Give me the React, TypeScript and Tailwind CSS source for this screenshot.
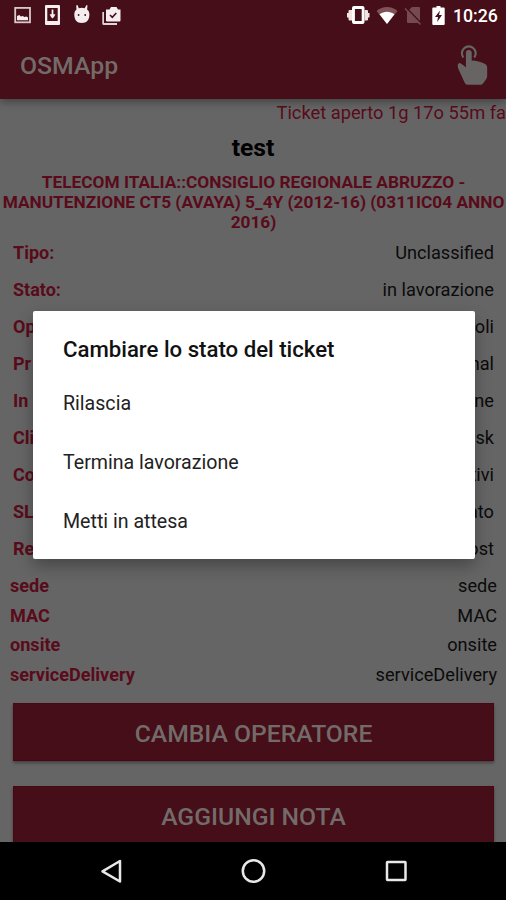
interface Field {
  label: string;
  value: string;
}

const FIELDS: Field[] = [
  { label: 'Tipo:', value: 'Unclassified' },
  { label: 'Stato:', value: 'in lavorazione' },
  { label: 'Op', value: 'oli' },
  { label: 'Pr', value: 'nal' },
  { label: 'In', value: 'ne' },
  { label: 'Cli', value: 'sk' },
  { label: 'Co', value: 'tivi' },
  { label: 'SL', value: 'ato' },
  { label: 'Re', value: 'ost' },
];

const EXTRA_FIELDS: Field[] = [
  { label: 'sede', value: 'sede' },
  { label: 'MAC', value: 'MAC' },
  { label: 'onsite', value: 'onsite' },
  { label: 'serviceDelivery', value: 'serviceDelivery' },
];

const OPTIONS = ['Rilascia', 'Termina lavorazione', 'Metti in attesa'];

function NotificationIcons() {
  return (
    <svg width="124" height="30" viewBox="0 0 124 30" fill="#f6eeee" aria-hidden="true">
      <rect x="15.200" y="7.900" width="14.800" height="14.400" fill="none" stroke="#d9c8ca" strokeWidth="1.800" />
      <path d="M17 20.300v-4.300l2.300-1 1.500 1.500 2-.5 1.500 1 2-.5 1.700 1v2.800z" />
      <path fillRule="evenodd" d="M46 5h13a1 1 0 0 1 1 1v18a1 1 0 0 1-1 1H46a1 1 0 0 1-1-1V6a1 1 0 0 1 1-1zM47.300 8v13h10.400V8z" />
      <path d="M51.600 9.500h1.800v4.800h2L54 17l-1.500 1.500L51 17l-1.400-2.700h2z" />
      <path d="M77.500 5l1.300 3.200a9 9 0 0 1 5.900 0L86.500 5l1 .6-.4 3.900c1.600 1 2.300 2.700 2.300 5 0 5-2.500 8.500-7.600 8.500s-7.500-3.500-7.500-8.500c0-2.300.700-4 2.200-5l-.3-3.900z" />
      <circle cx="78.600" cy="15" r="0.900" fill="#450e18" />
      <circle cx="85.200" cy="15" r="0.900" fill="#450e18" />
      <path d="M102.300 12h1.700v11H117v2h-13.200a1.500 1.500 0 0 1-1.500-1.500z" fill="#e3d5d7" />
      <path d="M106 9.500h3.500l1.500-2.500h5.500l1.500 2.500h2.500v11a1 1 0 0 1-1 1h-12.500a1 1 0 0 1-1-1z" />
      <path d="M110 15l2.300 2.300 4-4.300" fill="none" stroke="#450e18" strokeWidth="1.600" />
    </svg>
  );
}

function SystemIcons() {
  return (
    <svg width="106" height="30" viewBox="0 0 106 30" fill="#ffffff" aria-hidden="true">
      <path fillRule="evenodd" d="M14 6h8.500a2 2 0 0 1 2 2v14a2 2 0 0 1-2 2H14a2 2 0 0 1-2-2V8a2 2 0 0 1 2-2zM14.900 9v12h6.800V9z" />
      <path d="M9.500 10H12v10.500H9.500a1 1 0 0 1-1-1V11a1 1 0 0 1 1-1zM7 13h1.500v4.500H7zM24.500 10H27a1 1 0 0 1 1 1v8.500a1 1 0 0 1-1 1h-2.500zM28 13h1.500v4.500H28z" fill="#f0e4e5" />
      <path d="M36.500 11C42.500 5.500 51.500 5.500 57.500 11L47 24z" fill="#805159" />
      <path d="M39.500 14.300c4.500-3.500 10.500-3.500 15 0L47 24z" />
      <path d="M72 7h7a1 1 0 0 1 1 1v14a1 1 0 0 1-1 1H68a1 1 0 0 1-1-1V12z" fill="#754a52" />
      <path d="M66 7.500L81 23" stroke="#450e18" strokeWidth="1.500" />
      <path d="M65 8.500L80.500 24.500" stroke="#754a52" strokeWidth="1.500" />
      <path
        fillRule="evenodd"
        d="M96.500 6v1.500h-3.200a1 1 0 0 0-1 1V24a1 1 0 0 0 1 1h10.400a1 1 0 0 0 1-1V8.500a1 1 0 0 0-1-1h-3.200V6zM100 10.500L95 17h3l-.8 5 4.800-7h-3z"
      />
    </svg>
  );
}

function TapIcon() {
  return (
    <svg width="32" height="42" viewBox="0 0 32 42" aria-hidden="true">
      <path d="M6.300 13.500a6.900 6.900 0 1 1 11 0" fill="none" stroke="#686463" strokeWidth="2.200" />
      <path
        d="M8.900 9a2.900 2.900 0 0 1 5.800 0v7.500c4.500.2 9.500 1.300 13 3.200 1.800 1 2.500 2 2.500 4v8c0 2-.8 3.200-2 4.800l-2 2.800c-.9 1.100-1.700 1.500-3.200 1.500H11c-1.500 0-2.500-.5-3.300-2L1.200 24.500c-.8-3-.6-5 1.100-5.500 1.300-.3 4 2 6.600 4.500z"
        fill="#686463"
      />
    </svg>
  );
}

function StatusBar() {
  return (
    <div className="flex h-[30px] items-center justify-between">
      <NotificationIcons />
      <div className="flex items-center">
        <SystemIcons />
        <span className="w-[60px] pl-[7px] pt-[2px] text-[17.700px] font-medium leading-[30px] text-white">
          10:26
        </span>
      </div>
    </div>
  );
}

function FieldRow({ label, value }: Field) {
  return (
    <div className="flex h-[37px] items-center justify-between">
      <span className="text-[18px] font-bold text-[#590b1b]">{label}</span>
      <span>{value}</span>
    </div>
  );
}

function ActionButton({ children }: { children: string }) {
  return (
    <button className="block h-[58px] w-full shrink-0 border border-[#4a0614] bg-[#450e18] pt-px text-[24.700px] font-medium leading-[57px] text-[#736b69] shadow-[0_2px_3px_rgba(0,0,0,0.35)]">
      {children}
    </button>
  );
}

function StateDialog() {
  return (
    <div className="absolute left-[33px] top-[311px] h-[248px] w-[442px] rounded-[2px] bg-white px-[30px] pt-[20px] text-[#222] shadow-[0_7px_16px_rgba(0,0,0,0.3)]">
      <h2 className="text-[22.200px] font-medium leading-[36px] text-[#111]">Cambiare lo stato del ticket</h2>
      <ul className="pt-[7px] text-[19.600px]">
        {OPTIONS.map((option) => (
          <li key={option} className="h-[59px] leading-[59px]">
            {option}
          </li>
        ))}
      </ul>
    </div>
  );
}

function NavBar() {
  return (
    <nav className="h-[58px] w-full bg-black">
      <svg width="506" height="58" viewBox="0 0 506 58" fill="none" stroke="#e8e8e8" strokeWidth="2.500" aria-hidden="true">
        <path d="M120 19v20.500L102.500 29.300z" strokeLinejoin="round" />
        <circle cx="253.500" cy="29" r="10.700" />
        <rect x="387" y="20" width="18.500" height="18" rx="0.500" />
      </svg>
    </nav>
  );
}

export default function App() {
  return (
    <div className="relative flex h-[900px] w-[506px] flex-col overflow-hidden bg-[#656565] font-[Roboto,sans-serif] text-[18.200px] text-[#0b0b0b]">
      <header className="relative h-[99px] shrink-0 bg-[#450e18] shadow-[0_3px_8px_rgba(0,0,0,0.35)]">
        <StatusBar />
        <div className="flex h-[69px] items-center justify-between pl-5 pr-[17px]">
          <h1 className="pt-[3px] text-[24.800px] font-medium text-[#736b69]">OSMApp</h1>
          <TapIcon />
        </div>
      </header>

      <main className="h-[743px] shrink-0 overflow-hidden">
        <p className="h-[28px] text-right text-[18.300px] leading-[28px] text-[#590b1b]">
          Ticket aperto 1g 17o 55m fa
        </p>
        <h2 className="h-[45px] text-center text-[24.700px] font-bold leading-[41px] text-black">test</h2>
        <p className="h-[62px] whitespace-nowrap pl-px text-center text-[17.300px] font-bold leading-[20px] text-[#590b1b]">
          TELECOM ITALIA::CONSIGLIO REGIONALE ABRUZZO -<br />
          MANUTENZIONE CT5 (AVAYA) 5_4Y (2012-16) (0311IC04 ANNO
          <br />
          2016)
        </p>
        <div className="pl-[13px] pr-3">
          {FIELDS.map((field) => (
            <FieldRow key={field.label} {...field} />
          ))}
        </div>
        <div className="pl-[10px] pr-[9px] pt-[4px]">
          {EXTRA_FIELDS.map(({ label, value }) => (
            <div key={label} className="flex h-[29.500px] items-center justify-between">
              <span className="text-[18.100px] font-bold text-[#590b1b]">{label}</span>
              <span>{value}</span>
            </div>
          ))}
        </div>
        <div className="flex flex-col gap-[25px] pl-[13px] pr-3 pt-[14px]">
          <ActionButton>CAMBIA OPERATORE</ActionButton>
          <ActionButton>AGGIUNGI NOTA</ActionButton>
        </div>
      </main>

      <NavBar />
      <StateDialog />
    </div>
  );
}
